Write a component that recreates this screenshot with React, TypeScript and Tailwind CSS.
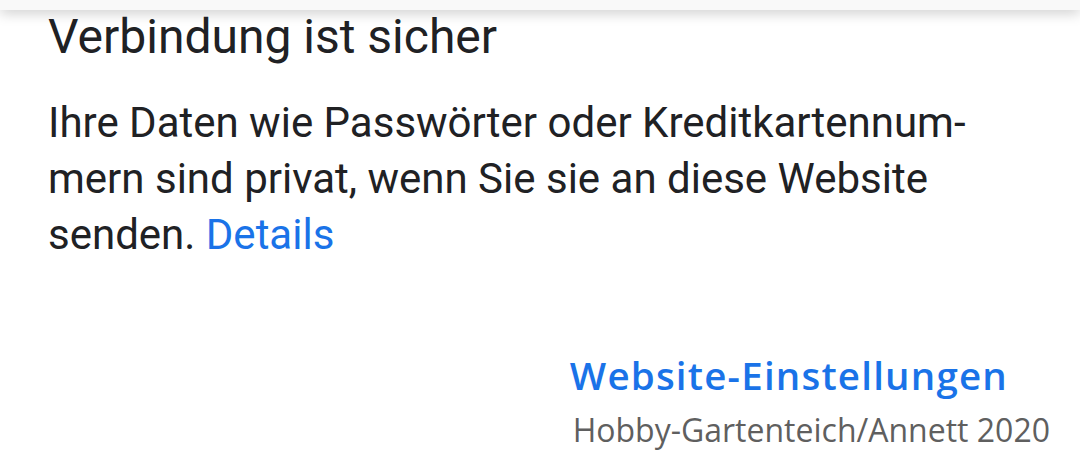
export default function App() {
  return (
    <div className="relative h-[472px] w-[1080px] overflow-hidden bg-white font-['Roboto',sans-serif]">
      <div className="h-[10px] bg-[#f9f9f9] shadow-[0_2px_14px_rgba(0,0,0,0.25)]" />
      <div className="pl-[48px] pr-[40px]">
        <h1 className="mt-[1px] text-[48px] leading-[52px] text-[#202124]">Verbindung ist sicher</h1>
        <p className="mt-[32px] w-[990px] text-[42px] leading-[56px] text-[#202124]">
          Ihre Daten wie Passwörter oder Kreditkartennum-
          <br />
          mern sind privat, wenn Sie sie an diese Website
          <br />
          senden. <span className="text-[#1a73e8]">Details</span>
        </p>
      </div>
      <div className="mt-[88px] flex flex-col items-end pr-[30px]">
        <span className="mr-[42px] font-['Open_Sans',sans-serif] text-[38.5px] font-semibold leading-[48px] tracking-[1.2px] text-[#1a73e8]">
          Website-Einstellungen
        </span>
        <span className="mt-[11px] font-['Open_Sans',sans-serif] text-[32px] leading-[40px] text-[#5f5f5f]">
          Hobby-Gartenteich/Annett 2020
        </span>
      </div>
    </div>
  );
}
